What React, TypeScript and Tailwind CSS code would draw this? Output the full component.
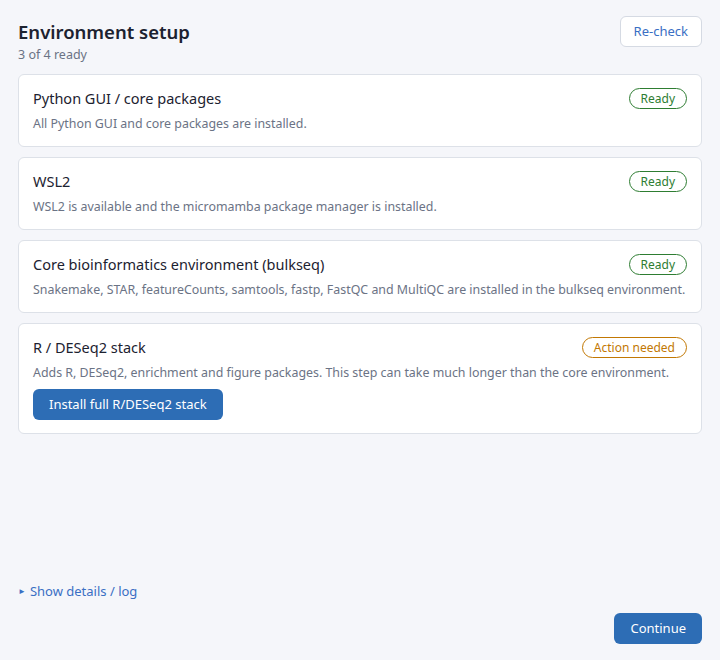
type Status = 'ready' | 'action';

interface Step {
  title: string;
  description: string;
  status: Status;
  action?: string;
}

const steps: Step[] = [
  { title: 'Python GUI / core packages', description: 'All Python GUI and core packages are installed.', status: 'ready' },
  { title: 'WSL2', description: 'WSL2 is available and the micromamba package manager is installed.', status: 'ready' },
  {
    title: 'Core bioinformatics environment (bulkseq)',
    description: 'Snakemake, STAR, featureCounts, samtools, fastp, FastQC and MultiQC are installed in the bulkseq environment.',
    status: 'ready',
  },
  {
    title: 'R / DESeq2 stack',
    description: 'Adds R, DESeq2, enrichment and figure packages. This step can take much longer than the core environment.',
    status: 'action',
    action: 'Install full R/DESeq2 stack',
  },
];

const StatusBadge = ({ status }: { status: Status }) =>
  status === 'ready' ? (
    <span className="shrink-0 h-[21px] px-[11px] flex items-center rounded-full border border-[#2e7d32] text-[#2e7d32] text-[12px] leading-none">
      Ready
    </span>
  ) : (
    <span className="shrink-0 h-[21px] px-[11px] flex items-center rounded-full border border-[#c27803] text-[#c27803] text-[12px] leading-none">
      Action needed
    </span>
  );

export default function App() {
  return (
    <div className="h-[660px] w-full bg-[#f5f6fa] flex flex-col px-[18px] pt-[16px] pb-[16px] font-['Noto_Sans',sans-serif] text-[#1c2230]">
      {/* Header */}
      <div className="flex items-start justify-between">
        <div className="flex flex-col">
          <h1 className="text-[18.5px] leading-[31px] font-semibold text-[#1c2230]">Environment setup</h1>
          <p className="text-[12.5px] leading-[16px] text-[#6b7385]">3 of 4 ready</p>
        </div>
        <button className="h-[31px] px-[13px] rounded-md border border-[#d5dae3] bg-white text-[13px] text-[#3a6fc4]">
          Re-check
        </button>
      </div>

      {/* Steps */}
      <div className="flex flex-col gap-[10px] mt-[11px]">
        {steps.map(step => (
          <div key={step.title} className="bg-white border border-[#dde1e8] rounded-md px-[14px] pt-[13px] pb-[13px]">
            <div className="flex items-center justify-between gap-4">
              <h3 className="text-[14.5px] leading-[21px] font-normal text-[#1c2230]">{step.title}</h3>
              <StatusBadge status={step.status} />
            </div>
            <p className="mt-[5px] text-[12.4px] leading-[19px] text-[#6b7385] whitespace-nowrap">{step.description}</p>
            {step.action && (
              <button className="mt-[7px] h-[31px] px-[16px] rounded-md bg-[#2d6db5] text-white text-[13px]">
                {step.action}
              </button>
            )}
          </div>
        ))}
      </div>

      <div className="flex-1" />

      {/* Details */}
      <div className="flex items-center gap-[4px] text-[13px] text-[#3a6fc4]">
        <span className="text-[8px] leading-none">&#9658;</span>
        <span>Show details / log</span>
      </div>

      {/* Footer */}
      <div className="flex justify-end mt-[12px]">
        <button className="h-[31px] px-[16px] rounded-md bg-[#2d6db5] text-white text-[13px]">Continue</button>
      </div>
    </div>
  );
}
